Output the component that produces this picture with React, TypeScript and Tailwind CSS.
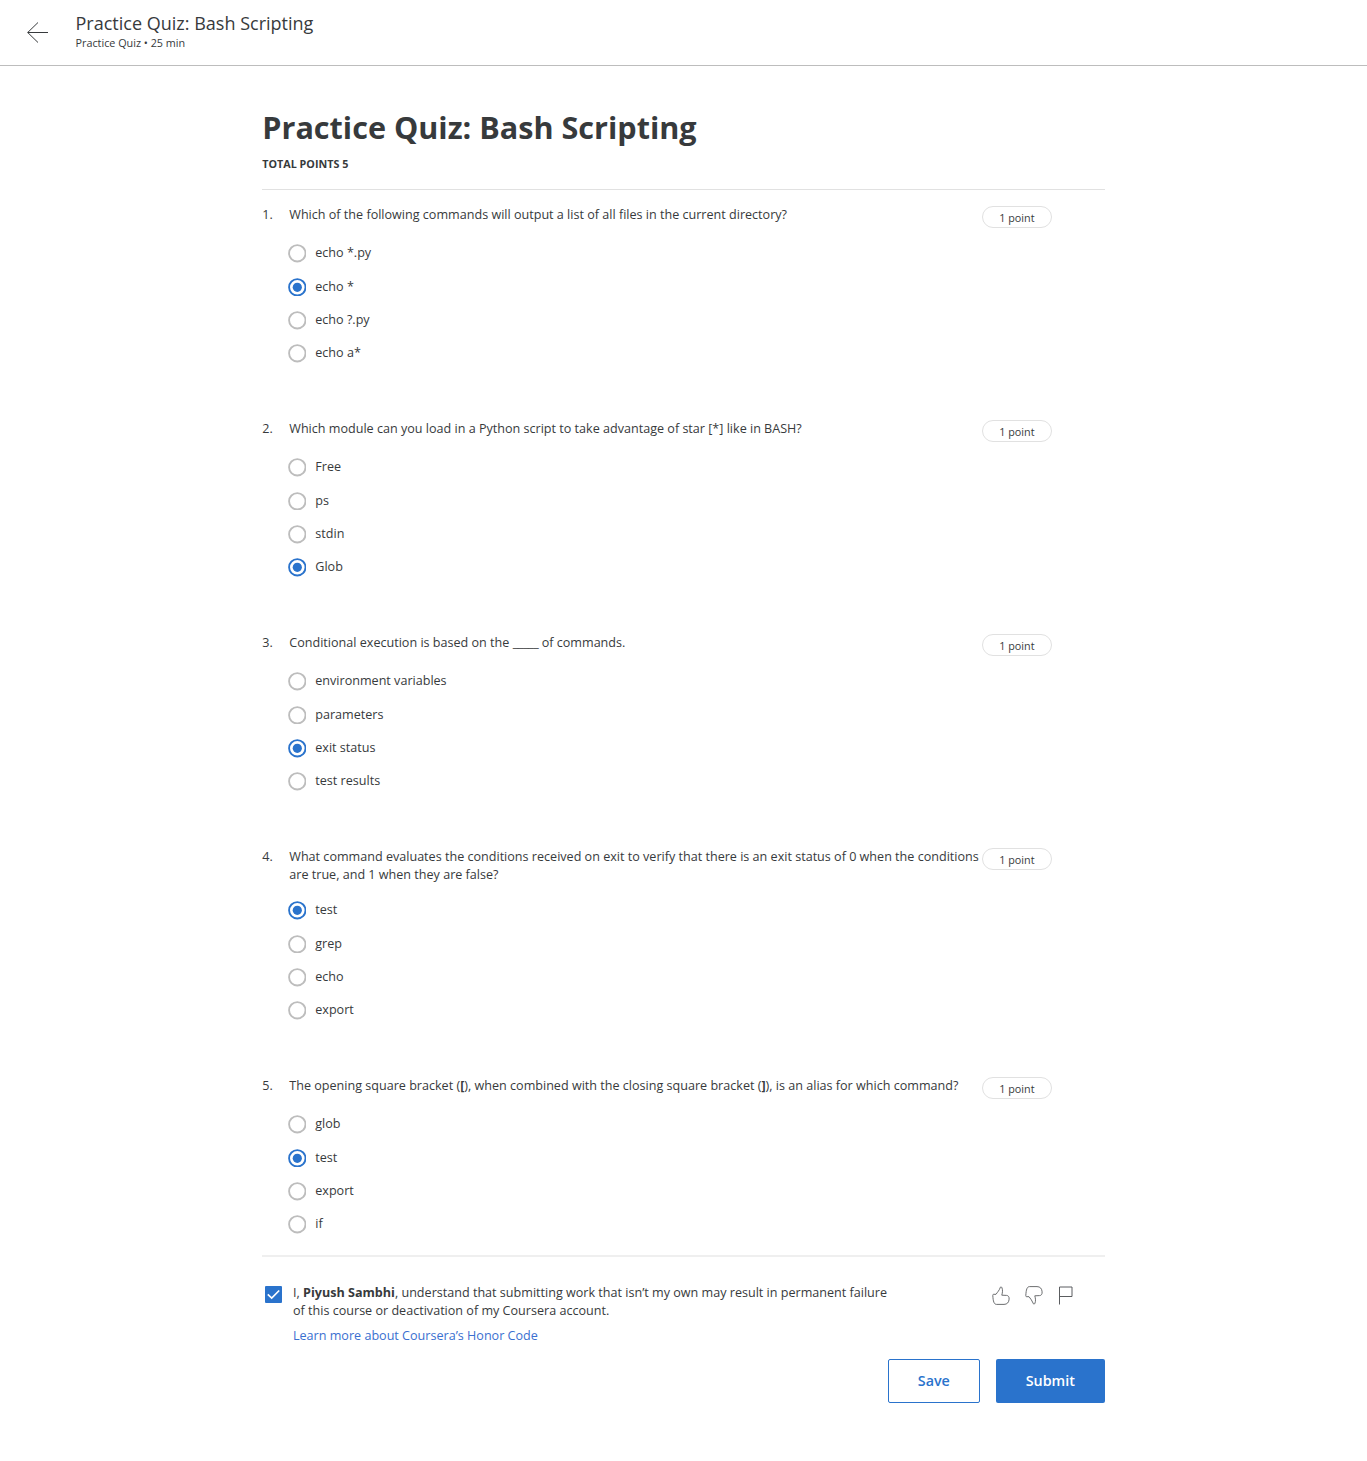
import React, { useState } from "react";

type Question = { title: React.ReactNode; options: string[]; selected: number };

const questions: Question[] = [
  {
    title: "Which of the following commands will output a list of all files in the current directory?",
    options: ["echo *.py", "echo *", "echo ?.py", "echo a*"],
    selected: 1,
  },
  {
    title: "Which module can you load in a Python script to take advantage of star [*] like in BASH?",
    options: ["Free", "ps", "stdin", "Glob"],
    selected: 3,
  },
  {
    title: (
      <>
        Conditional execution is based on the <span className="tracking-[-0.35px]">_____</span> of commands.
      </>
    ),
    options: ["environment variables", "parameters", "exit status", "test results"],
    selected: 2,
  },
  {
    title:
      "What command evaluates the conditions received on exit to verify that there is an exit status of 0 when the conditions are true, and 1 when they are false?",
    options: ["test", "grep", "echo", "export"],
    selected: 0,
  },
  {
    title: (
      <>
        The opening square bracket (<b>[</b>), when combined with the closing square bracket (<b>]</b>), is an alias for
        which command?
      </>
    ),
    options: ["glob", "test", "export", "if"],
    selected: 1,
  },
];

function Radio({ on }: { on: boolean }) {
  return (
    <svg className="mt-[0.2px] size-[18.6px] shrink-0" viewBox="0 0 19 19" fill="none">
      <circle cx="9.5" cy="9.5" r="8.4" stroke={on ? "#2a73cc" : "#bdbdbd"} strokeWidth="1.9" />
      {on && <circle cx="9.5" cy="9.5" r="4.7" fill="#2a73cc" />}
    </svg>
  );
}

function QuestionBlock({ q, index }: { q: Question; index: number }) {
  const [selected, setSelected] = useState(q.selected);
  return (
    <section className="pb-[49.95px] last:pb-0">
      <div className="flex min-h-[21.5px] items-start leading-[18.2px]">
        <span className="w-[27px] shrink-0">{index + 1}.</span>
        <h2 className="w-[693px] shrink-0 pr-[1px]">{q.title}</h2>
        <span className="-mb-1 flex h-[22px] w-[70px] shrink-0 items-center justify-center rounded-full border border-[#e1e1e1] pr-[0.8px] pt-[2px] text-[10.8px] text-[#373a3c]">
          1 point
        </span>
      </div>
      <div className="mt-[9.3px] pl-[25.5px]">
        {q.options.map((option, i) => (
          <button
            type="button"
            key={option}
            onClick={() => setSelected(i)}
            className="flex h-[33.33px] w-full items-center gap-[8.9px] text-left"
          >
            <Radio on={selected === i} />
            <span className="-mt-[0.3px]">{option}</span>
          </button>
        ))}
      </div>
    </section>
  );
}

const thumb =
  "M.8 9.5 C1 12.5 1.2 14.5 1.9 16.3 C2.5 17.7 3.3 18.4 4.6 18.4 H12 C15.2 18.4 16.9 16.3 17.1 13.2 C17.3 10.8 16.3 9.5 14.5 9.4 L9.8 9.2 C10.6 6.5 10.8 3.7 9.9 1.7 C9.4 .5 8.500 .5 8.2 1.7 C7.3 4.3 5.5 6.2 4 8.3 H1.6 C1 8.3 .7 8.7 .8 9.5 Z";

export default function App() {
  return (
    <div className="min-h-[1461px] bg-white font-['Open_Sans',sans-serif] text-[12.59px] leading-[18px] text-[#373a3c]">
      <header className="flex h-[66px] border-b border-[#bdbdbd] pl-[27px]">
        <svg className="mt-[22px] h-[22px] w-[21px]" viewBox="0 0 21 22" fill="none" stroke="#373a3c" strokeWidth="1">
          <path d="M21 10.5H.7M11 .5l-10.3 10L11 20.5" />
        </svg>
        <div className="pl-[27.5px] pt-[12px]">
          <div className="text-[18.02px] leading-[22px]">Practice Quiz: Bash Scripting</div>
          <div className="text-[10.8px] leading-[18px]">Practice Quiz • 25 min</div>
        </div>
      </header>
      <main className="ml-[262.3px] w-[843px] pt-[40px]">
        <h1 className="text-[30.58px] font-bold leading-[42px]">Practice Quiz: Bash Scripting</h1>
        <p className="mt-[7px] text-[10.75px] font-bold">TOTAL POINTS 5</p>
        <div className="mt-[16px] border-t border-[#e1e1e1] pt-[16px]">
          {questions.map((q, i) => (
            <QuestionBlock key={i} q={q} index={i} />
          ))}
        </div>
        <footer className="mt-[13.8px] border-t-2 border-[#efefef] pt-[26.5px]">
          <div className="flex items-start">
            <svg className="ml-[2.7px] mt-[2.5px] h-[17px] w-[17px] shrink-0" viewBox="0 0 17 17" fill="none">
              <rect width="17" height="17" rx="1" fill="#2a73cc" />
              <path d="M2.8 8.3l3.9 3.7 7.5-7.5" stroke="#fff" strokeWidth="1.7" />
            </svg>
            <div className="ml-[11px] w-[600px]">
              <p>
                I, <b>Piyush Sambhi</b>, understand that submitting work that isn’t my own may result in permanent
                failure of this course or deactivation of my Coursera account.
              </p>
              <a className="mt-[7px] block text-[#3a6fd0]">Learn more about Coursera’s Honor Code</a>
            </div>
            <div className="ml-[99.2px] mt-[2.2px] flex gap-[15.2px] text-[#5b5d60]">
              <svg className="h-[19px] w-[18px]" viewBox="0 0 18 19" fill="none" stroke="currentColor" strokeWidth=".9">
                <path d={thumb} />
              </svg>
              <svg
                className="h-[19px] w-[18px] rotate-180 -scale-x-100"
                viewBox="0 0 18 19"
                fill="none"
                stroke="currentColor"
                strokeWidth=".9"
              >
                <path d={thumb} />
              </svg>
              <svg className="h-[19px] w-[14px]" viewBox="0 0 14 19" fill="none" stroke="currentColor" strokeWidth="1">
                <path d="M.5 18.5V1H13v9.5H.5" />
              </svg>
            </div>
          </div>
          <div className="mt-[14.6px] flex justify-end gap-[16px] text-[14.3px] font-semibold">
            <button className="h-[44px] w-[92px] rounded-[2px] border border-[#2a73cc] pr-[1px] text-[#2a73cc]">
              Save
            </button>
            <button className="h-[44px] w-[109px] rounded-[2px] bg-[#2a73cc] pr-[1px] text-white">Submit</button>
          </div>
        </footer>
      </main>
    </div>
  );
}
